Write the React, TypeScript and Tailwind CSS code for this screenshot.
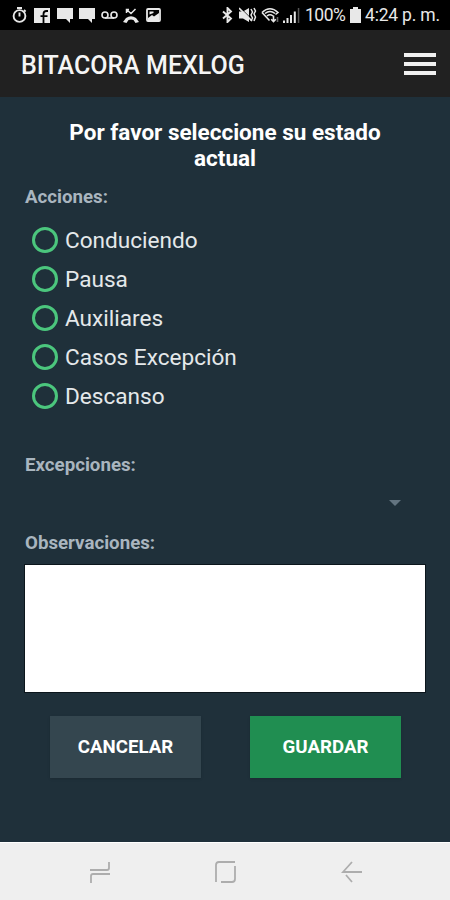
import { useState } from 'react';

const ACTIONS = ['Conduciendo', 'Pausa', 'Auxiliares', 'Casos Excepción', 'Descanso'];

function ChatIcon({ className }: { className: string }) {
  return (
    <svg className={className} width="16" height="15" viewBox="0 0 16 15" fill="currentColor">
      <path d="M0 0h16v11h-3v4l-4-4H0z" />
    </svg>
  );
}

function StatusBar() {
  return (
    <div className="flex h-[30px] items-center bg-black text-[#e8e8e8]">
      <svg className="ml-3" width="15" height="16" viewBox="0 0 15 16" fill="none" stroke="currentColor" strokeWidth="1.9">
        <circle cx="7.5" cy="9" r="5.9" />
        <path d="M5 1h5M7.5 5.5v4M12 3l1.6 1.6" />
      </svg>
      <svg className="ml-[7px]" width="16" height="15" viewBox="0 0 16 15">
        <path d="M0 0h16v15H0z" fill="currentColor" />
        <path d="M9.5 15V6q0-3 3-3h1.5M6.5 8.2h7" fill="none" stroke="#000" strokeWidth="1.8" />
      </svg>
      <ChatIcon className="ml-[7px]" />
      <ChatIcon className="ml-[6px]" />
      <svg className="ml-[6px]" width="17" height="8" viewBox="0 0 17 8" fill="none" stroke="currentColor" strokeWidth="1.6">
        <circle cx="4" cy="4" r="3" />
        <circle cx="13" cy="4" r="3" />
        <path d="M4 7h9" />
      </svg>
      <svg className="ml-[5px]" width="16" height="15" viewBox="0 0 16 15">
        <path d="M3.5 1.5L8 5.5l4.5-4.5M3.500 5V1.500H6" fill="none" stroke="currentColor" strokeWidth="1.5" />
        <path d="M0 14l3-4q5-3.500 10 0l3 4-3.500 1-2-3q-2.500-1-5 0l-2 3z" fill="currentColor" />
      </svg>
      <svg className="ml-[7px]" width="15" height="14" viewBox="0 0 15 14">
        <rect x="1" y="1" width="13" height="12" rx="1" fill="none" stroke="currentColor" strokeWidth="1.8" />
        <path d="M2 12v-2l4-3 2 1.5L13 5v7z" fill="currentColor" />
        <path d="M3.5 3.5h4V5l-4 1.5z" fill="currentColor" />
      </svg>
      <svg className="ml-[61px] shrink-0" width="11" height="16" viewBox="0 0 11 16" fill="none" stroke="currentColor" strokeWidth="1.9">
        <path d="M1 4.500l8 7L5.500 15V1L9 4.500l-8 7" />
      </svg>
      <svg className="ml-[6px] shrink-0" width="18" height="16" viewBox="0 0 18 16">
        <path d="M0 4.500h4l6-3.500v14l-6-3.500H0z" fill="currentColor" />
        <path d="M2 1.500l12 12" stroke="#000" strokeWidth="1" />
        <path d="M0 1l13 13" stroke="currentColor" strokeWidth="1.6" />
        <path d="M12 2l1.500 3L12 8l1.500 3L12 14M15 1l1.500 3L15 7l1.500 3L15 14" fill="none" stroke="currentColor" strokeWidth="1.5" />
      </svg>
      <svg className="ml-[4px] shrink-0" width="19" height="16" viewBox="0 0 19 16" fill="none" stroke="currentColor" strokeWidth="1.6">
        <path d="M1 5.500Q9-2 17 5.500L14.500 7.500M1 5.500l7.500 8M4 6.500q5-4 10 0M6 9q3-2.500 6 0" />
        <path d="M12.500 8.500v6M10.200 12.200l2.300 2.300 2.300-2.300" />
        <path d="M16.500 10v5" stroke="#666" />
      </svg>
      <svg className="ml-[3px] shrink-0" width="18" height="16" viewBox="0 0 18 16" fill="currentColor">
        <path d="M0 13.500h2V16H0zM3.500 11h2v5h-2zM7 8h2v8H7zM10.800 4.500h2V16h-2z" />
        <path d="M14.800 1h1.500v15h-1.500z" fill="#555" />
      </svg>
      <span className="ml-[4px] mt-[2px] w-10 shrink-0 whitespace-nowrap text-[17.5px] leading-none tracking-[-0.5px]">100%</span>
      <svg className="ml-[5px] shrink-0" width="11" height="16" viewBox="0 0 11 16" fill="currentColor">
        <path d="M3 0h5v2h3v14H0V2h3z" />
      </svg>
      <span className="ml-[4px] mt-[2px] shrink-0 whitespace-nowrap text-[17.5px] leading-none tracking-[-0.2px]">4:24 p. m.</span>
    </div>
  );
}

function Header() {
  return (
    <header className="flex h-[67px] items-center justify-between bg-[#212121] pl-[21px] pr-[14px]">
      <h1 className="mt-[3px] text-[25px] font-medium leading-none text-[#f5f5f5]">BITACORA MEXLOG</h1>
      <button className="flex w-8 flex-col gap-[5px]" type="button" aria-label="Menú">
        <span className="h-1 w-full bg-[#f0f0f0]" />
        <span className="h-1 w-full bg-[#f0f0f0]" />
        <span className="h-1 w-full bg-[#f0f0f0]" />
      </button>
    </header>
  );
}

function NavBar() {
  return (
    <nav className="flex h-[58px] items-center border-t border-white bg-[#efefef] pl-[89px] text-[#adadad]">
      <svg width="22" height="24" viewBox="0 0 22 24" fill="none" stroke="currentColor" strokeWidth="1.8">
        <path d="M1 10h17q2 0 2-2V2M21 14H4q-2 0-2 2v7" />
      </svg>
      <svg className="ml-[103px]" width="23" height="24" viewBox="0 0 23 24" fill="none" stroke="currentColor" strokeWidth="1.8">
        <path d="M2 22V5q0-3 3-3h16M21 6v13q0 3-3 3H7" />
      </svg>
      <svg className="ml-[104px]" width="22" height="24" viewBox="0 0 22 24" fill="none" stroke="currentColor" strokeWidth="1.8">
        <path d="M21 12H2L11 2M5 15l6 7" />
      </svg>
    </nav>
  );
}

export default function App() {
  const [selected, setSelected] = useState('');

  return (
    <div className="flex h-[900px] w-[450px] flex-col overflow-hidden bg-[#1f303a] font-['Roboto',sans-serif]">
      <StatusBar />
      <Header />

      <main className="flex flex-1 flex-col px-[25px] pt-[22px]">
        <h2 className="text-center text-[22.5px] font-bold leading-[26px] text-white">
          Por favor seleccione su estado
          <br />
          actual
        </h2>

        <p className="mt-[14px] text-[18.7px] font-bold leading-6 text-[#a9b5bf]">Acciones:</p>
        <div className="mt-[11px] flex flex-col pl-[7px]">
          {ACTIONS.map((action) => (
            <button
              key={action}
              className="flex h-[39px] items-center gap-[7px] text-[22.6px] text-[#e4e8ea]"
              type="button"
              onClick={() => setSelected(action)}
            >
              <span className="flex h-[26px] w-[26px] items-center justify-center rounded-full border-[3px] border-[#4bc67d]">
                {selected === action && <span className="h-3 w-3 rounded-full bg-[#4bc67d]" />}
              </span>
              <span className="pt-[2px]">{action}</span>
            </button>
          ))}
        </div>

        <p className="mt-[38px] text-[18.7px] font-bold leading-6 text-[#a9b5bf]">Excepciones:</p>
        <button className="flex h-[54px] items-center justify-end pb-[2px] pr-[24px]" type="button" aria-label="Excepciones">
          <svg width="12" height="6" viewBox="0 0 12 6" fill="#637480">
            <path d="M0 0h12L6 6z" />
          </svg>
        </button>

        <p className="text-[18.7px] font-bold leading-6 text-[#a9b5bf]">Observaciones:</p>
        <textarea
          className="-mx-px mt-[9px] h-[129px] shrink-0 resize-none border border-[#0c161c] bg-white p-2 outline-none"
          aria-label="Observaciones"
        />

        <div className="mt-[23px] flex justify-between pl-[25px] pr-[24px] text-[18.7px] font-bold text-white">
          <button className="h-[62px] w-[151px] bg-[#34464f] pt-px shadow-sm" type="button">
            CANCELAR
          </button>
          <button className="h-[62px] w-[151px] bg-[#208e51] pt-px shadow-sm" type="button">
            GUARDAR
          </button>
        </div>
      </main>

      <NavBar />
    </div>
  );
}
